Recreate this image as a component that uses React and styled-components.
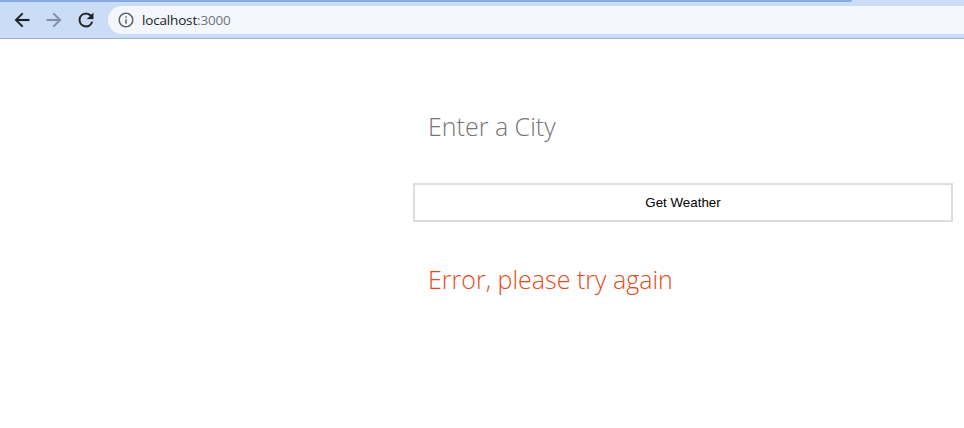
import React from "react";
import styled, { createGlobalStyle } from "styled-components";

const GlobalStyle = createGlobalStyle`
  * { box-sizing: border-box; }
  body { margin: 0; background: #fff; overflow: hidden; }
`;

const Browser = styled.div`
  display: flex;
  flex-direction: column;
  height: 428px;
  overflow: hidden;
`;

const TabEdge = styled.div`
  height: 2px;
  background: #cbdcf6;
`;

const TabStrip = styled.div`
  width: 852px;
  height: 2px;
  background: #82a9e6;
  border-bottom-right-radius: 3px 2px;
`;

const Toolbar = styled.header`
  display: flex;
  align-items: center;
  height: 37px;
  padding-left: 11px;
  background: #cbdcf6;
  border-bottom: 1px solid #a3b1cb;
`;

const NavButton = styled.button`
  display: flex;
  width: 22px;
  height: 22px;
  margin: 0 10px 0 0;
  padding: 0;
  border: 0;
  background: none;
  color: ${(p) => (p.$muted ? "#838fa6" : "#202124")};
  svg { width: 22px; height: 22px; stroke: currentColor; stroke-width: 0.2; }
`;

const AddressBar = styled.div`
  display: flex;
  align-items: center;
  flex: 1;
  height: 28px;
  margin-left: 1px;
  padding-left: 9px;
  background: #f3f7fd;
  border-radius: 14px 0 0 14px;
  svg { width: 18px; height: 18px; color: #5f6368; }
`;

const Url = styled.span`
  margin-left: 7px;
  font: 13.5px/20px "Open Sans", sans-serif;
  letter-spacing: -0.17px;
  color: #202124;
`;

const Port = styled.span`
  color: #70757a;
`;

const Page = styled.main`
  display: flex;
  flex-direction: column;
  width: 540px;
  margin: 62px 0 0 413px;
`;

const CityInput = styled.input`
  width: 100%;
  height: 50px;
  padding: 0 15px;
  border: 0;
  outline: none;
  background: transparent;
  font: 300 25px/50px "Open Sans", sans-serif;
  &::placeholder { color: #757575; opacity: 1; }
`;

const WeatherButton = styled.button`
  height: 39px;
  margin-top: 32px;
  padding: 0;
  border: 2px solid #ddd;
  background: #fff;
  color: #000;
  font: 13.333px "Liberation Sans", Arial, sans-serif;
`;

const ErrorText = styled.p`
  margin: 32px 0 0;
  padding: 0 15px;
  font: 300 25px/50px "Open Sans", sans-serif;
  color: #e64a19;
`;

const Icon = ({ d, box = "0 0 24 24" }) => (
  <svg viewBox={box} fill="currentColor" aria-hidden="true">
    <path d={d} />
  </svg>
);

export default function App() {
  return (
    <Browser>
      <GlobalStyle />
      <TabEdge>
        <TabStrip />
      </TabEdge>
      <Toolbar>
        <NavButton aria-label="Back">
          <Icon d="M20 11H7.83l5.59-5.59L12 4l-8 8 8 8 1.41-1.41L7.83 13H20v-2z" />
        </NavButton>
        <NavButton $muted aria-label="Forward">
          <Icon d="M12 4l-1.41 1.41L16.17 11H4v2h12.17l-5.58 5.59L12 20l8-8z" />
        </NavButton>
        <NavButton aria-label="Reload">
          <Icon d="M17.65 6.35A7.958 7.958 0 0 0 12 4a8 8 0 1 0 7.73 10h-2.08A6 6 0 1 1 12 6c1.66 0 3.14.69 4.22 1.78L13 11h7V4l-2.35 2.35z" />
        </NavButton>
        <AddressBar>
          <Icon d="M11 7h2v2h-2zm0 4h2v6h-2zm1-9C6.48 2 2 6.48 2 12s4.48 10 10 10 10-4.48 10-10S17.52 2 12 2zm0 18c-4.41 0-8-3.59-8-8s3.59-8 8-8 8 3.59 8 8-3.59 8-8 8z" />
          <Url>
            localhost<Port>:3000</Port>
          </Url>
        </AddressBar>
      </Toolbar>
      <Page>
        <CityInput placeholder="Enter a City" />
        <WeatherButton>Get Weather</WeatherButton>
        <ErrorText>Error, please try again</ErrorText>
      </Page>
    </Browser>
  );
}
